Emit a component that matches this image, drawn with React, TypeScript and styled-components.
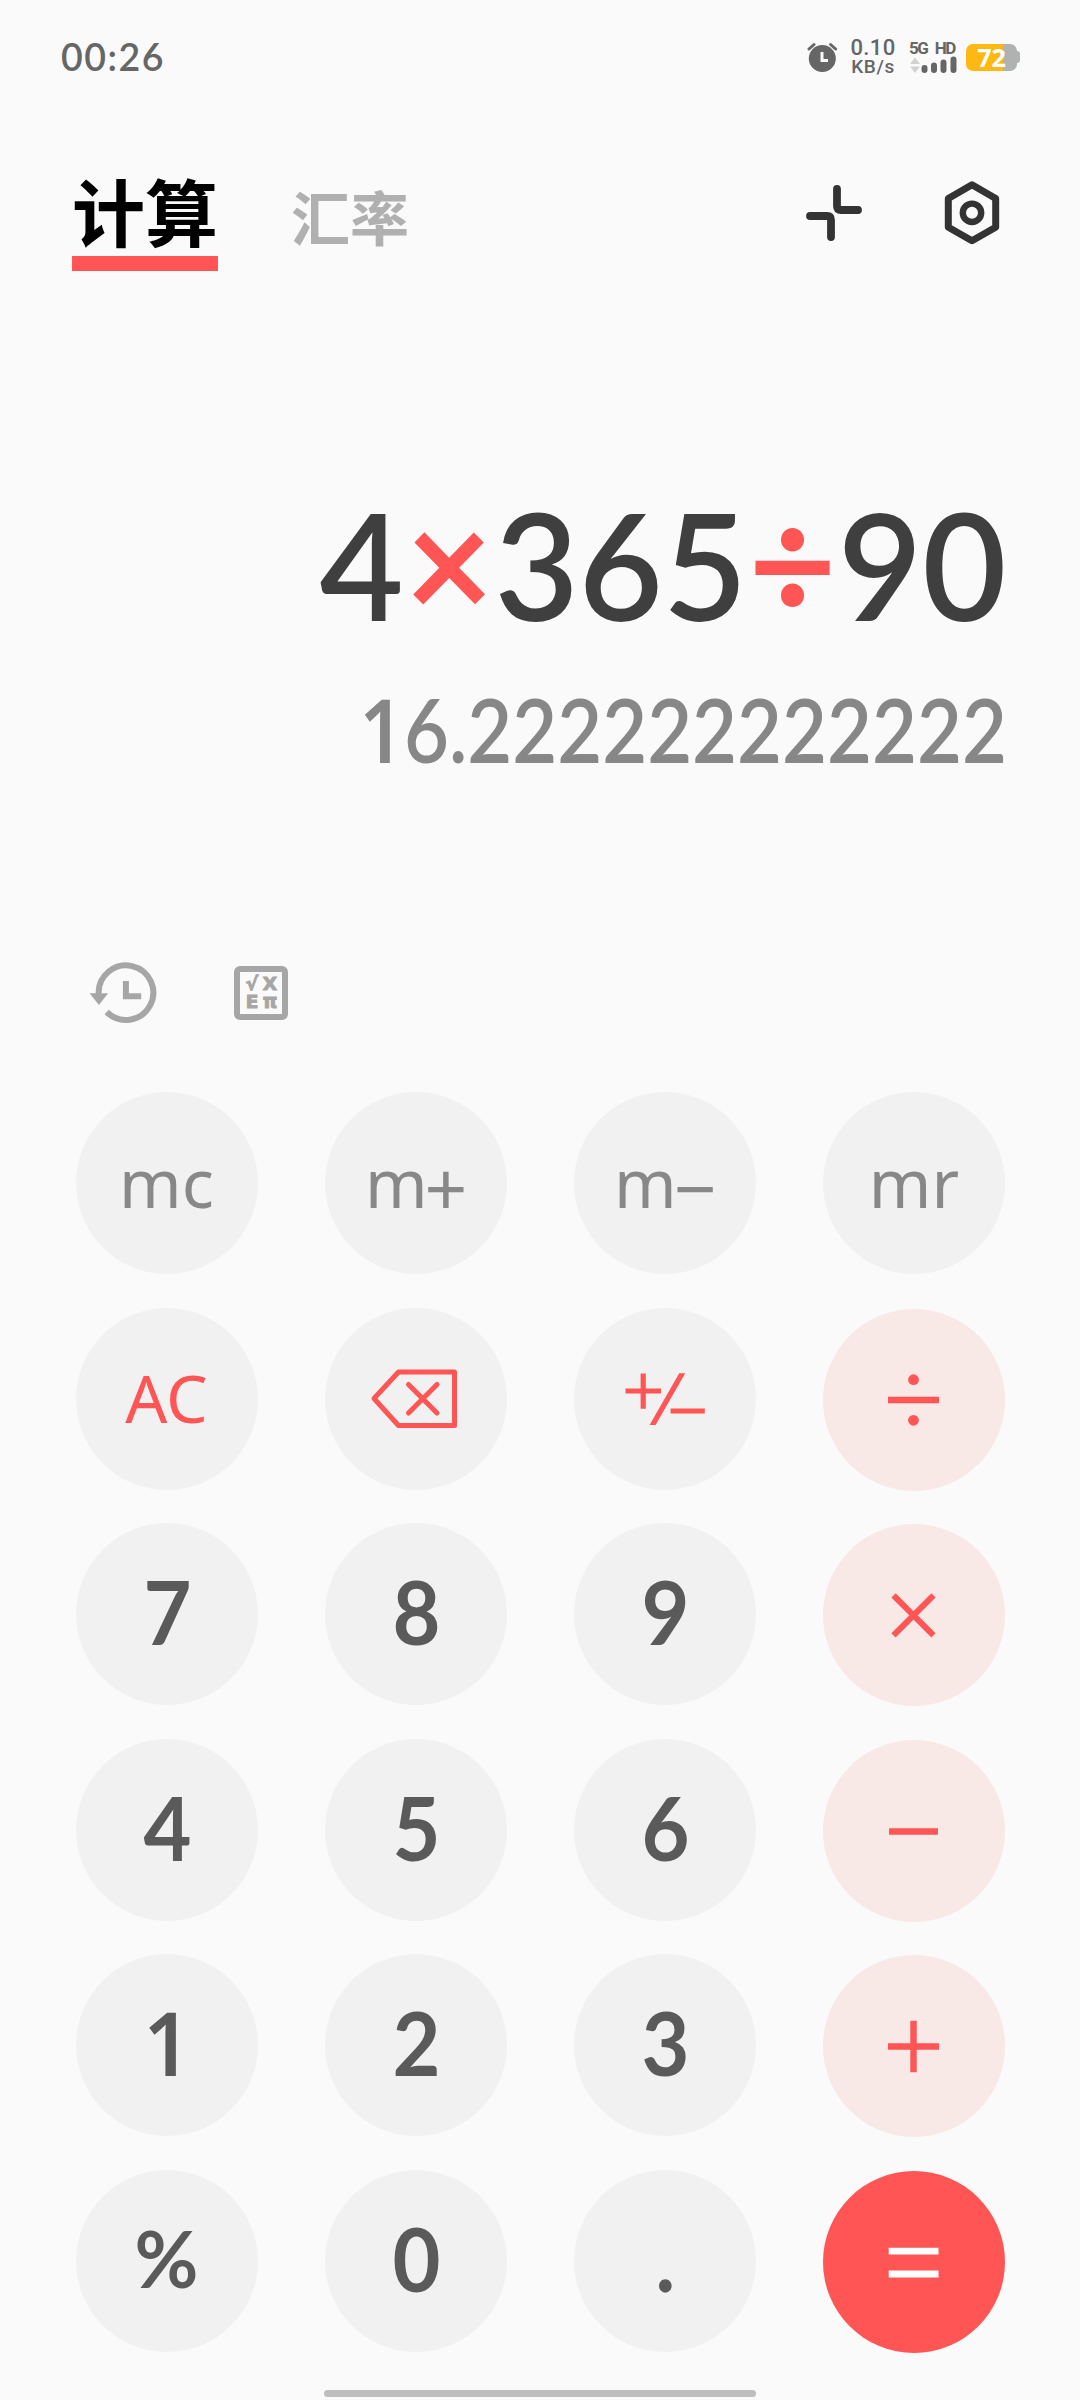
import React from 'react';
import styled, { createGlobalStyle } from 'styled-components';

const RED = '#ff5555';
const PAGE = '#fafafa';
const DIGIT_FONT = "Lato, 'Noto Sans', sans-serif";
const LABEL_FONT = "'Noto Sans', 'Open Sans', sans-serif";
const CJK_FONT = "'Noto Sans CJK SC', 'Noto Sans', sans-serif";

const GlobalStyle = createGlobalStyle`
  * { box-sizing: border-box; }
  html, body { margin: 0; background: ${PAGE}; }
`;

const Screen = styled.main`
  width: 1080px;
  height: 2400px;
  overflow: hidden;
  display: flex;
  flex-direction: column;
  background: ${PAGE};
  font-family: ${DIGIT_FONT};
`;

const StatusBar = styled.header`
  height: 114px;
  padding: 0 60px 0 61px;
  display: flex;
  align-items: center;
  justify-content: space-between;
  color: #666;
`;

const Clock = styled.time`
  font-size: 37.5px;
  line-height: 40px;
  font-weight: 600;
  letter-spacing: 1.5px;
  padding-bottom: 1px;
`;

const StatusIcons = styled.div`
  display: flex;
  align-items: center;
  height: 40px;
`;

const NetSpeed = styled.div`
  width: 46px;
  margin-left: 12px;
  display: flex;
  flex-direction: column;
  align-items: center;
  font-family: Roboto, sans-serif;
  font-weight: 500;
`;

const SpeedValue = styled.span`
  font-size: 22px;
  line-height: 20px;
  letter-spacing: 0.4px;
`;

const SpeedUnit = styled.span`
  font-size: 19px;
  line-height: 18px;
  letter-spacing: 0.6px;
`;

const Signal = styled.div`
  width: 48px;
  margin-left: 13px;
  display: flex;
  flex-direction: column;
`;

const SignalLabels = styled.div`
  display: flex;
  justify-content: space-between;
  height: 16px;
  padding-right: 2px;
  font: 700 17px/16px Roboto, sans-serif;
  letter-spacing: -1.4px;
`;

const Battery = styled.div`
  display: flex;
  align-items: center;
  margin-left: 9px;
`;

const BatteryBody = styled.div<{ $level: number }>`
  width: 51px;
  height: 27px;
  border-radius: 7px;
  display: flex;
  align-items: center;
  justify-content: center;
  background: linear-gradient(90deg, #fdb813 ${p => p.$level}%, #b0b2b2 ${p => p.$level}%);
  color: #fff;
  font: 700 25px/27px 'Open Sans', sans-serif;
`;

const BatteryNub = styled.div`
  width: 3px;
  height: 12px;
  border-radius: 0 3px 3px 0;
  background: #b0b2b2;
`;

const TopNav = styled.nav`
  height: 157px;
  padding: 0 72px;
  display: flex;
  justify-content: space-between;
`;

const Tabs = styled.div`
  display: flex;
  align-items: flex-end;
  gap: 73px;
  font-family: ${CJK_FONT};
  font-weight: 700;
`;

const ActiveTab = styled.div`
  width: 146px;
  display: flex;
  justify-content: center;
  padding-bottom: 4px;
  border-bottom: 15px solid ${RED};
  color: #000;
  font-size: 73px;
  line-height: 86px;
  white-space: nowrap;
`;

const Tab = styled.div`
  color: #b0b0b0;
  font-size: 59px;
  line-height: 60px;
  padding-bottom: 25px;
  white-space: nowrap;
`;

const NavActions = styled.div`
  display: flex;
  gap: 81px;
  padding: 67px 8px 0 0;
`;

const Display = styled.section`
  height: 669px;
  padding: 213px 73px 0;
  display: flex;
  flex-direction: column;
  align-items: flex-end;
`;

const Expression = styled.div`
  display: flex;
  height: 160px;
  font-size: 149px;
  line-height: 160px;
  font-weight: 600;
  color: #3f3f3f;
  white-space: nowrap;
  transform: scaleX(0.975);
  transform-origin: right;
`;

const Operator = styled.span`
  width: 93px;
  margin-top: -4px;
  display: flex;
  justify-content: center;
  font-size: 156px;
  color: ${RED};
  font-weight: 700;
`;

const Result = styled.div`
  height: 100px;
  margin-top: 35px;
  font-size: 88.5px;
  line-height: 100px;
  font-weight: 600;
  color: #878787;
  white-space: nowrap;
  transform: scaleX(0.876);
  transform-origin: right;
`;

const PlainOne = styled.span`
  font-family: ${LABEL_FONT};
  font-weight: 600;
  line-height: 0;
`;

const Tools = styled.div`
  height: 152px;
  padding: 20px 0 0 88px;
  display: flex;
  align-items: flex-start;
  gap: 76px;
`;

const FunctionBox = styled.div`
  width: 54px;
  height: 54px;
  margin-top: 6px;
  padding: 3px;
  border: 6px solid #a6a6a6;
  border-radius: 6px;
  display: grid;
  grid-template-columns: 18px 18px;
  grid-template-rows: 18px 18px;
  place-items: center;
  color: #a6a6a6;
  font: 700 18.5px/18px 'DejaVu Sans', sans-serif;
  -webkit-text-stroke: 1px #a6a6a6;
`;

const Keypad = styled.section`
  width: 929.5px;
  margin: 0 0 0 75.5px;
  display: grid;
  grid-template-columns: repeat(4, 182px);
  grid-template-rows: repeat(6, 182px);
  justify-content: space-between;
  row-gap: 33.5px;
`;

type Tone = 'memory' | 'clear' | 'digit' | 'percent' | 'op' | 'equals';

const background: Record<Tone, string> = {
  memory: '#f1f1f1',
  clear: '#f1f1f1',
  digit: '#f1f1f1',
  percent: '#f1f1f1',
  op: '#f8e8e6',
  equals: RED,
};

const ink: Record<Tone, string> = {
  memory: '#888',
  clear: RED,
  digit: '#5a5a5a',
  percent: '#5a5a5a',
  op: RED,
  equals: '#fff',
};

const label: Record<Tone, string> = {
  memory: `400 67px/90px ${LABEL_FONT}`,
  clear: `400 66px/90px ${LABEL_FONT}`,
  digit: `700 88px/90px ${DIGIT_FONT}`,
  percent: `700 78px/90px ${DIGIT_FONT}`,
  op: `400 66px/90px ${LABEL_FONT}`,
  equals: `400 66px/90px ${LABEL_FONT}`,
};

const lift: Record<Tone, number> = { memory: 2, clear: 4, digit: 6, percent: 5, op: 0, equals: 0 };

const Key = styled.button<{ $tone: Tone }>`
  width: 182px;
  height: 182px;
  margin: ${p => (p.$tone === 'op' || p.$tone === 'equals' ? '1px' : '0')} 0 0;
  padding: 0 0 ${p => lift[p.$tone]}px;
  border: 0;
  border-radius: 50%;
  display: flex;
  align-items: center;
  justify-content: center;
  background: ${p => background[p.$tone]};
  color: ${p => ink[p.$tone]};
  font: ${p => label[p.$tone]};
`;

const Digit = styled.span`
  display: block;
  padding-left: 2px;
  transform: scaleX(0.94);
`;

const MemoryLabel = styled.span`
  display: block;
  white-space: nowrap;
`;

const MemorySign = styled.span`
  margin: 0 -1px 0 -3px;
  font-size: 75px;
  font-weight: 400;
  line-height: 0;
  vertical-align: -8px;
`;

const Glyph = styled.svg`
  display: block;
  flex: none;
  fill: none;
  stroke: currentColor;
`;

const KeyGlyph = styled(Glyph)<{ $drop?: number }>`
  margin-top: ${p => p.$drop ?? 0}px;
`;

const CollapseGlyph = styled(Glyph)`
  margin-top: 3px;
`;

const HomeBar = styled.div`
  width: 432px;
  height: 7px;
  margin: 38.5px 0 0 324px;
  border-radius: 4px;
  background: #bebebe;
  flex: none;
`;

const AlarmIcon = () => (
  <Glyph width="31" height="32" viewBox="0 0 31 32">
    <circle cx="15.3" cy="17.5" r="13.5" fill="currentColor" stroke="none" />
    <path d="M2 8l5-4.500M28.600 8l-5-4.500" strokeWidth="3" strokeLinecap="round" />
    <path d="M15 11v8.500h6" stroke={PAGE} strokeWidth="3" />
  </Glyph>
);

const SignalBars = () => (
  <Glyph width="48" height="18" viewBox="0 0 48 18" strokeLinecap="round" strokeWidth="6">
    <path d="M1 8l5-6.500L11 8zM1 10.500h10L6 17z" fill="#d2d2d2" stroke="none" />
    <path d="M15.500 12v2M25 9.500V14M34.500 6.500V14M44.500 3.500V14" />
  </Glyph>
);

const CollapseIcon = () => (
  <CollapseGlyph width="58" height="58" viewBox="0 0 58 58" color="#333" strokeWidth="7.8" strokeLinecap="round" strokeLinejoin="round">
    <path d="M32 5v17q0 4 4 4h17" />
    <path d="M5 32h17q4 0 4 4v17" />
  </CollapseGlyph>
);

const SettingsIcon = () => (
  <Glyph width="56" height="66" viewBox="0 0 56 66" color="#333" strokeLinejoin="round">
    <path d="M28 3.700L51.700 17.500V46.300L28 59.800L4.300 46.300V17.500z" strokeWidth="7" />
    <circle cx="28" cy="31.800" r="9.200" strokeWidth="6.400" />
  </Glyph>
);

const HistoryIcon = () => (
  <Glyph width="70" height="66" viewBox="0 0 70 66" color="#a6a6a6" strokeWidth="6">
    <path d="M10.700 34A27.300 27.300 0 1 1 18.700 52" />
    <path d="M1.600 33.200h18.600L10.900 45z" fill="currentColor" stroke="none" />
    <path d="M37.900 21v15.200h15.300" />
  </Glyph>
);

const BackspaceIcon = () => (
  <KeyGlyph $drop={3} width="182" height="182" viewBox="0 0 182 182" strokeWidth="5" strokeLinecap="round" strokeLinejoin="round">
    <path d="M49 91.500L73.500 65H129.500V118.500H73.500z" />
    <path d="M83.500 77.500l28.500 28.500M112 77.500L83.500 106" />
  </KeyGlyph>
);

const SignIcon = () => (
  <KeyGlyph $drop={3} width="182" height="182" viewBox="0 0 182 182" strokeWidth="5.200">
    <path d="M51.500 84H87M69.200 66.500V101.700M96.600 104H130.800" />
    <path d="M105.200 66.300h6L81.600 118h-6z" fill="currentColor" stroke="none" />
  </KeyGlyph>
);

const DivideIcon = () => (
  <KeyGlyph width="182" height="182" viewBox="0 0 182 182" strokeWidth="6.400">
    <path d="M65 91h51" />
    <circle cx="90.500" cy="70.700" r="5.400" fill="currentColor" stroke="none" />
    <circle cx="90.500" cy="111.300" r="5.400" fill="currentColor" stroke="none" />
  </KeyGlyph>
);

const TimesIcon = () => (
  <KeyGlyph width="182" height="182" viewBox="0 0 182 182" strokeWidth="6">
    <path d="M70.500 71.300l40 40M110.500 71.300l-40 40" />
  </KeyGlyph>
);

const MinusIcon = () => (
  <KeyGlyph width="182" height="182" viewBox="0 0 182 182" strokeWidth="6.400">
    <path d="M66 91.500h49" />
  </KeyGlyph>
);

const PlusIcon = () => (
  <KeyGlyph width="182" height="182" viewBox="0 0 182 182" strokeWidth="6.400">
    <path d="M65 91.500h51M90.500 65.800v51.500" />
  </KeyGlyph>
);

const EqualsIcon = () => (
  <KeyGlyph width="182" height="182" viewBox="0 0 182 182" strokeWidth="6.800">
    <path d="M65.700 80.200h49.800M65.700 103h49.800" />
  </KeyGlyph>
);

const digit = (value: string) => ({ id: value, tone: 'digit' as Tone, face: <Digit>{value}</Digit> });

const memory = (sign: string) => ({
  id: `m${sign}`,
  tone: 'memory' as Tone,
  face: (
    <MemoryLabel>
      m<MemorySign>{sign}</MemorySign>
    </MemoryLabel>
  ),
});

const keys: { id: string; tone: Tone; face: React.ReactNode }[] = [
  { id: 'mc', tone: 'memory', face: 'mc' },
  memory('+'),
  memory('−'),
  { id: 'mr', tone: 'memory', face: 'mr' },
  { id: 'ac', tone: 'clear', face: 'AC' },
  { id: 'back', tone: 'clear', face: <BackspaceIcon /> },
  { id: 'sign', tone: 'clear', face: <SignIcon /> },
  { id: 'divide', tone: 'op', face: <DivideIcon /> },
  digit('7'),
  digit('8'),
  digit('9'),
  { id: 'times', tone: 'op', face: <TimesIcon /> },
  digit('4'),
  digit('5'),
  digit('6'),
  { id: 'minus', tone: 'op', face: <MinusIcon /> },
  { id: '1', tone: 'digit', face: <Digit><PlainOne>1</PlainOne></Digit> },
  digit('2'),
  digit('3'),
  { id: 'plus', tone: 'op', face: <PlusIcon /> },
  { id: 'percent', tone: 'percent', face: '%' },
  digit('0'),
  digit('.'),
  { id: 'equals', tone: 'equals', face: <EqualsIcon /> },
];

export default function App() {
  return (
    <Screen>
      <GlobalStyle />
      <StatusBar>
        <Clock>00:26</Clock>
        <StatusIcons>
          <AlarmIcon />
          <NetSpeed>
            <SpeedValue>0.10</SpeedValue>
            <SpeedUnit>KB/s</SpeedUnit>
          </NetSpeed>
          <Signal>
            <SignalLabels>
              <span>5G</span>
              <span>HD</span>
            </SignalLabels>
            <SignalBars />
          </Signal>
          <Battery>
            <BatteryBody $level={72}>72</BatteryBody>
            <BatteryNub />
          </Battery>
        </StatusIcons>
      </StatusBar>
      <TopNav>
        <Tabs>
          <ActiveTab>计算</ActiveTab>
          <Tab>汇率</Tab>
        </Tabs>
        <NavActions>
          <CollapseIcon />
          <SettingsIcon />
        </NavActions>
      </TopNav>
      <Display>
        <Expression>
          4<Operator>×</Operator>365<Operator>÷</Operator>90
        </Expression>
        <Result>
          <PlainOne>1</PlainOne>6.222222222222
        </Result>
      </Display>
      <Tools>
        <HistoryIcon />
        <FunctionBox>
          <span>√</span>
          <span>X</span>
          <span>E</span>
          <span>π</span>
        </FunctionBox>
      </Tools>
      <Keypad>
        {keys.map(key => (
          <Key key={key.id} $tone={key.tone}>
            {key.face}
          </Key>
        ))}
      </Keypad>
      <HomeBar />
    </Screen>
  );
}
